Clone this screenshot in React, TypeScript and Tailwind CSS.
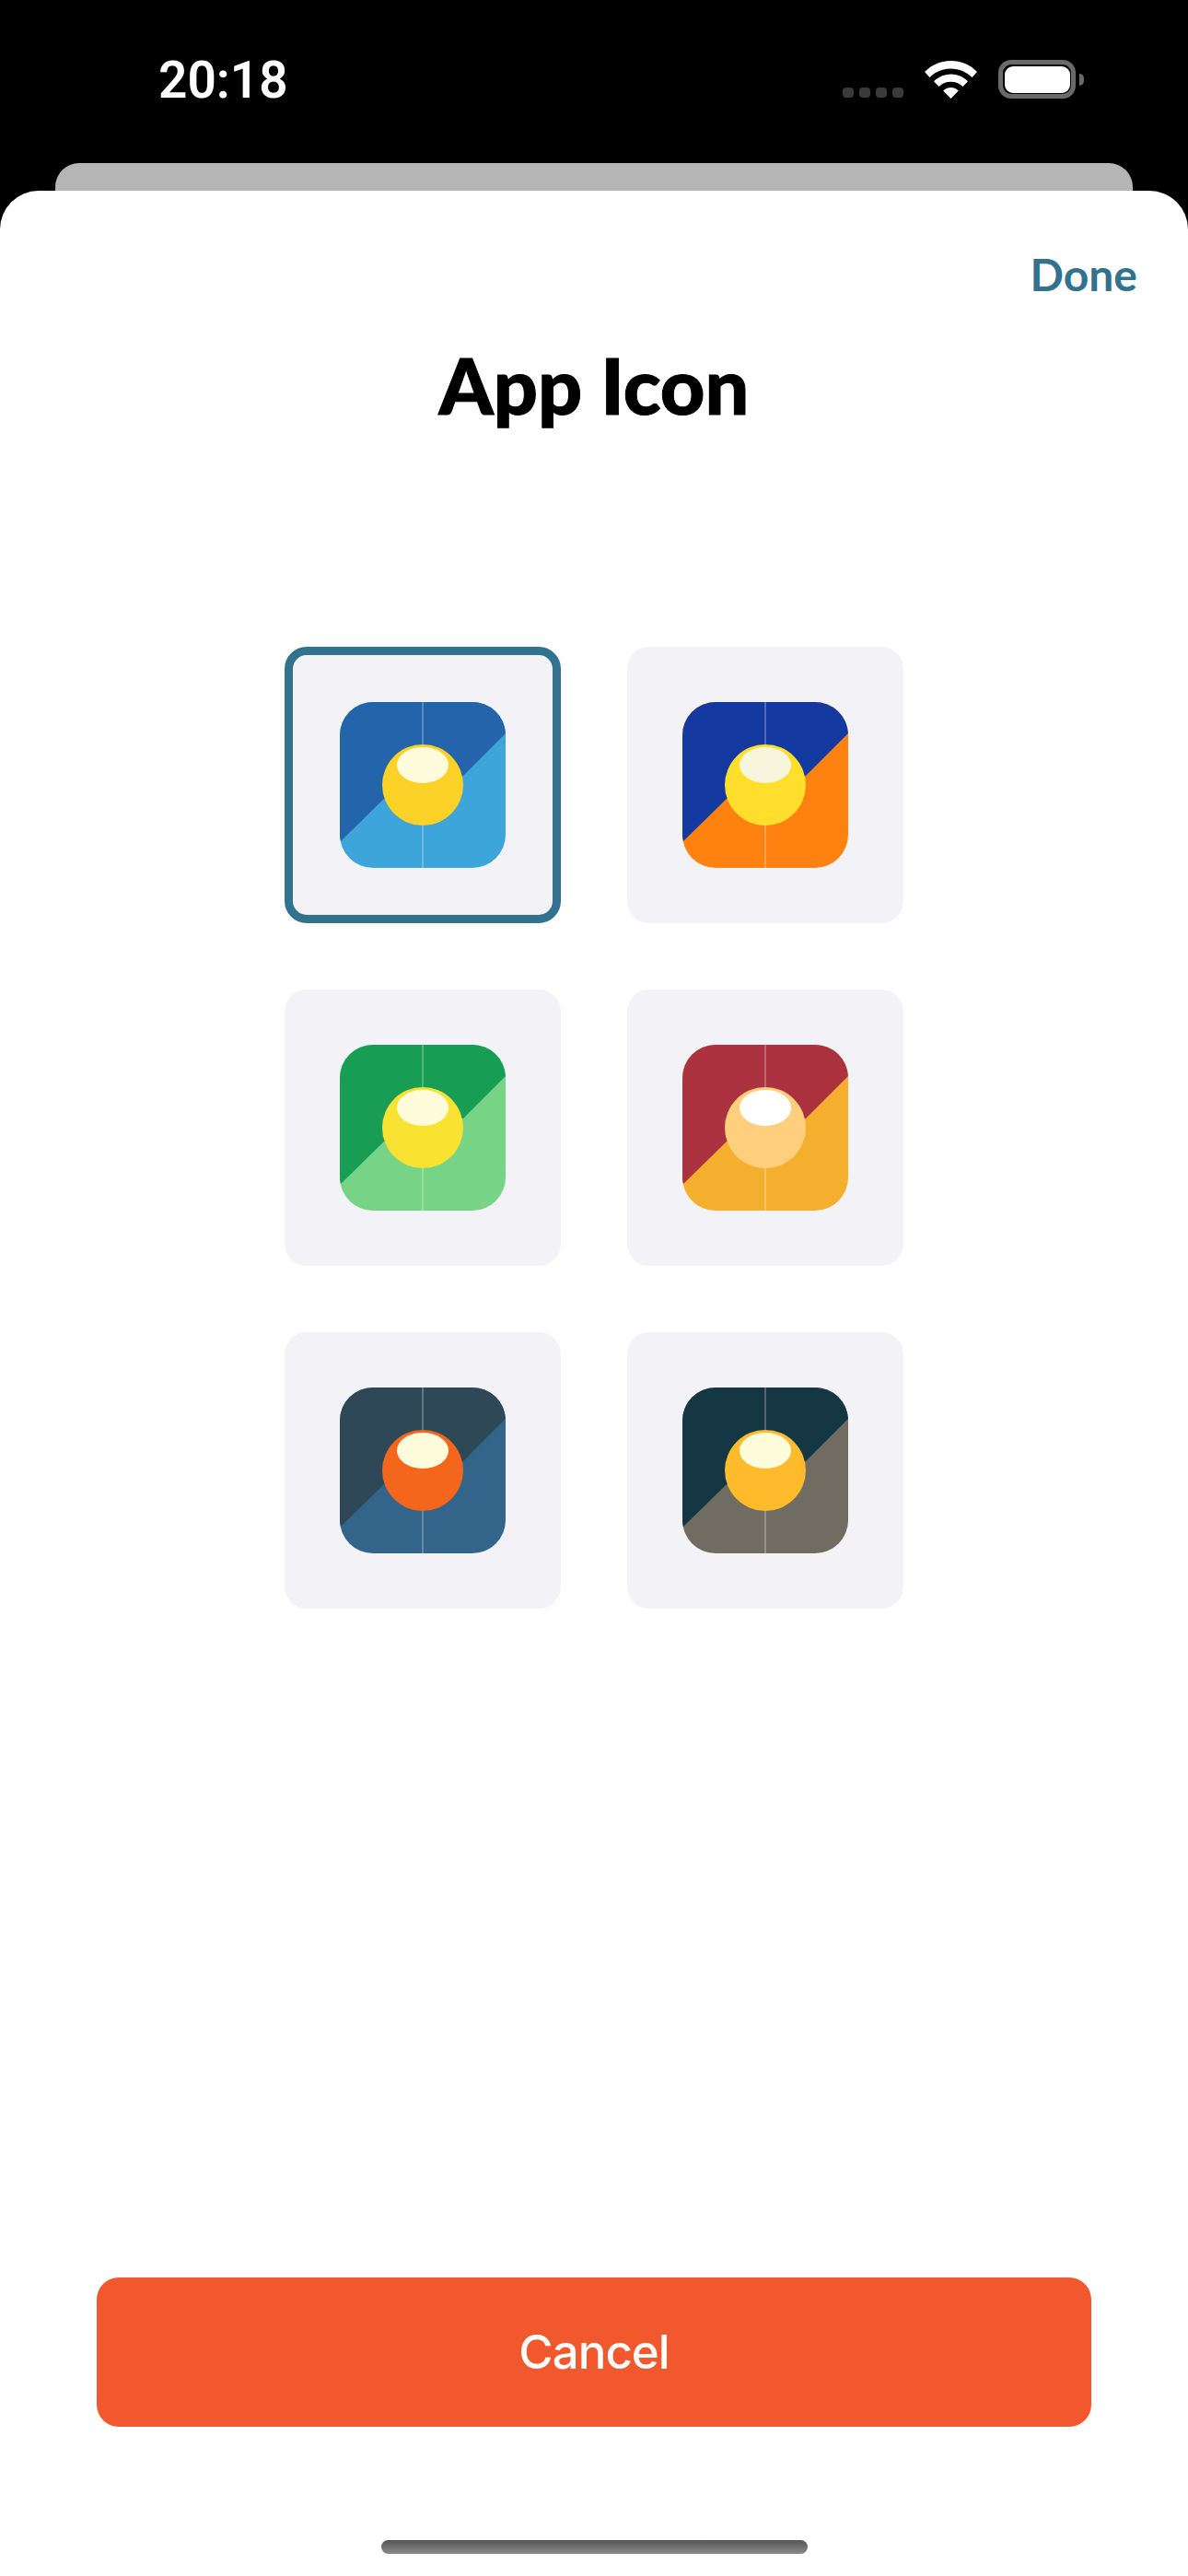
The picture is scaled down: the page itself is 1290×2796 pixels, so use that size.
const icons = [
  { dark: "#2364aa", light: "#3da5d9", ball: "#fcd229", glare: "#fffcdc", selected: true },
  { dark: "#143aa2", light: "#ff8110", ball: "#ffdf2b", glare: "#f7f6dc" },
  { dark: "#189d55", light: "#77d486", ball: "#f9e231", glare: "#fffcdc" },
  { dark: "#ab323e", light: "#f5af2f", ball: "#ffcf7e", glare: "#ffffff" },
  { dark: "#2f4858", light: "#33658a", ball: "#f4661b", glare: "#fffcdc" },
  { dark: "#153643", light: "#706c61", ball: "#ffbb2b", glare: "#fffcdc" },
];

function AppIcon({ dark, light, ball, glare }: { dark: string; light: string; ball: string; glare: string }) {
  return (
    <svg width="180" height="180" viewBox="0 0 180 180">
      <rect width="180" height="180" rx="36" fill={light} />
      <path d="M36 0H144A36 36 0 0 1 180 34L134 80L48 105L1 151Q0 148 0 144V36A36 36 0 0 1 36 0Z" fill={dark} />
      <rect x="89.5" y="0" width="1" height="180" fill="#fff" fillOpacity="0.5" />
      <circle cx="90" cy="90" r="44" fill={ball} />
      <ellipse cx="90" cy="68.5" rx="28" ry="19.5" fill={glare} />
    </svg>
  );
}

export default function App() {
  return (
    <div className="flex h-[2796px] w-[1290px] flex-col overflow-hidden bg-black font-['Lato',sans-serif]">
      <div className="flex h-[177px] shrink-0 items-start justify-between pl-[172px] pr-[113px] pt-[55px]">
        <span className="font-['Roboto',sans-serif] text-[55px] font-semibold leading-[64px] text-white">20:18</span>
        <div className="flex items-end pt-[10px]">
          <div className="mb-[1px] flex gap-[6px]">
            {[0, 1, 2, 3].map((i) => (
              <div key={i} className="h-[11px] w-[12px] rounded-[4px] bg-[#3a3a3a]" />
            ))}
          </div>
          <svg className="ml-[23px]" width="57" height="41" viewBox="0 0 57 41">
            <path d="M28.5 0C39.5 0 49.5 4.2 57 12L51.5 18C45.5 12 37.5 8.4 28.5 8.4S11.5 12 5.5 18L0 12C7.5 4.2 17.5 0 28.5 0Z" fill="#fff" />
            <path d="M28.5 14.5C35.5 14.5 42 17.3 47 22.2L41.5 28C38 24.6 33.5 22.8 28.5 22.8S19 24.6 15.5 28L10 22.2C15 17.3 21.5 14.5 28.5 14.5Z" fill="#fff" />
            <path d="M28.5 29C31.5 29 34.4 30.2 36.8 32.4L28.5 41L20.2 32.4C22.6 30.2 25.5 29 28.5 29Z" fill="#fff" />
          </svg>
          <div className="ml-[23px] flex h-[42px] w-[84px] items-center justify-center rounded-[14px] border-[5px] border-[#6a6a6a]">
            <div className="h-[29px] w-[71px] rounded-[9px] bg-white" />
          </div>
          <div className="mb-[14px] ml-[4px] h-[13px] w-[5px] rounded-r-full bg-[#6a6a6a]" />
        </div>
      </div>

      <div className="mx-[60px] h-[30px] shrink-0 rounded-t-[26px] bg-[#b5b5b5]" />

      <div className="relative flex flex-1 flex-col items-center rounded-t-[42px] bg-white">
        <div className="flex w-full justify-end pr-[55px] pt-[62px]">
          <span className="text-[48px] font-bold leading-[58px] text-[#33728f]">Done</span>
        </div>
        <h1 className="mt-[41px] text-[84.5px] font-black leading-[100px] text-black [-webkit-text-stroke:1px_black]">App Icon</h1>

        <div className="mt-[234px] grid grid-cols-2 gap-[72px]">
          {icons.map((icon, i) => (
            <div
              key={i}
              className={
                icon.selected
                  ? "flex h-[300px] w-[300px] items-center justify-center rounded-[24px] border-[9px] border-[#33728f] bg-[#f2f2f7]"
                  : "flex h-[300px] w-[300px] items-center justify-center rounded-[24px] bg-[#f2f2f7]"
              }
            >
              <AppIcon dark={icon.dark} light={icon.light} ball={icon.ball} glare={icon.glare} />
            </div>
          ))}
        </div>

        <div className="mt-auto flex h-[162px] w-[1080px] items-center justify-center rounded-[24px] bg-[#f1582d]">
          <span className="font-['Inter',sans-serif] text-[51px] font-medium tracking-[-1px] text-white">Cancel</span>
        </div>
        <div className="mb-[24px] mt-[123px] h-[15px] w-[463px] rounded-full bg-linear-to-b from-[#555555] to-[#8a8a8a]" />
      </div>
    </div>
  );
}
